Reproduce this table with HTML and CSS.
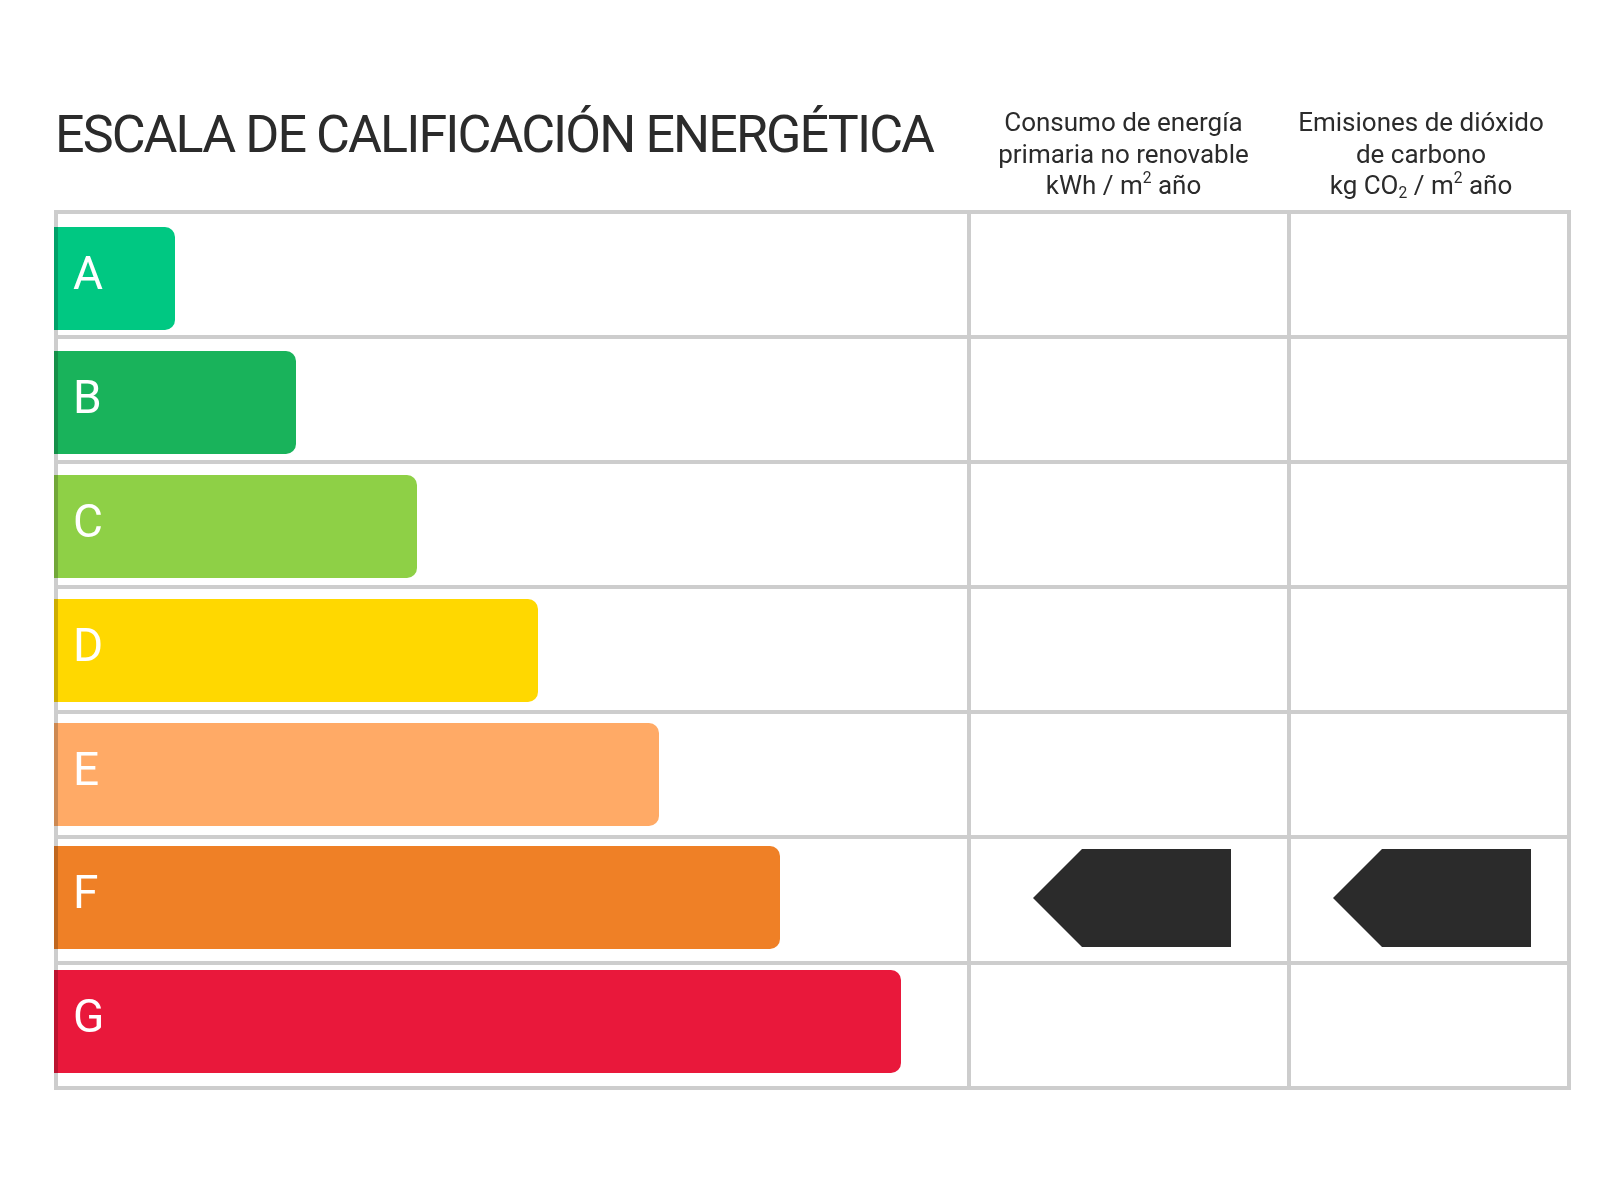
FILE: index.html
```html
<!DOCTYPE html>
<html lang="es">
<head>
<meta charset="utf-8">
<title>Escala de calificación energética</title>
<link rel="stylesheet" href="styles.css">
</head>
<body>
<div class="page">
  <div class="head">
    <h1 class="title">ESCALA DE CALIFICACIÓN ENERGÉTICA</h1>
    <div class="colhead c1">Consumo de energía<br>primaria no renovable<br>kWh / m<span class="sup">2</span> año</div>
    <div class="colhead c2">Emisiones de dióxido<br>de carbono<br>kg CO<span class="sub">2</span> / m<span class="sup">2</span> año</div>
  </div>
  <div class="table">
    <div class="cell k1 r1"></div><div class="cell k2 r1"></div><div class="cell k3 r1"></div>
    <div class="cell k1 r2"></div><div class="cell k2 r2"></div><div class="cell k3 r2"></div>
    <div class="cell k1 r3"></div><div class="cell k2 r3"></div><div class="cell k3 r3"></div>
    <div class="cell k1 r4"></div><div class="cell k2 r4"></div><div class="cell k3 r4"></div>
    <div class="cell k1 r5"></div><div class="cell k2 r5"></div><div class="cell k3 r5"></div>
    <div class="cell k1 r6"></div>
    <div class="cell k2 r6 mark"><svg class="arrow" viewBox="0 0 198 98" width="198" height="98"><polygon points="0,49 49,0 198,0 198,98 49,98"/></svg></div>
    <div class="cell k3 r6 mark"><svg class="arrow" viewBox="0 0 198 98" width="198" height="98"><polygon points="0,49 49,0 198,0 198,98 49,98"/></svg></div>
    <div class="cell k1 r7"></div><div class="cell k2 r7"></div><div class="cell k3 r7"></div>
    <div class="bars">
      <div class="bar a" style="width:121px">A</div>
      <div class="bar b" style="width:242px">B</div>
      <div class="bar c" style="width:363px">C</div>
      <div class="bar d" style="width:484px">D</div>
      <div class="bar e" style="width:605px">E</div>
      <div class="bar f" style="width:726px">F</div>
      <div class="bar g" style="width:847px">G</div>
    </div>
  </div>
</div>
</body>
</html>
```
FILE: styles.css
```css
html, body {
  margin: 0;
  padding: 0;
  background: #ffffff;
}
body {
  font-family: Roboto, "Liberation Sans", sans-serif;
  color: #2b2b2b;
}
.page {
  width: 1517px;
  margin-left: 54px;
  padding-top: 107px;
}
.head {
  display: grid;
  grid-template-columns: 917px 320px 280px;
  align-items: start;
  margin-bottom: 8px;
}
.title {
  margin: 2px 0 0 1px;
  font-size: 52px;
  line-height: 52px;
  font-weight: 400;
  letter-spacing: -1.9px;
  white-space: nowrap;
  color: #2b2b2b;
}
.colhead {
  font-size: 26px;
  line-height: 31.6px;
  text-align: center;
  color: #2b2b2b;
}
.c1 { padding-right: 15px; }
.c2 { padding-right: 20px; }
.sup, .sub {
  font-size: 0.6em;
  line-height: 0;
}
.sup { vertical-align: 0.7em; }
.sub { vertical-align: -0.25em; }
.table {
  display: grid;
  grid-template-columns: 909px 316px 276px;
  grid-template-rows: repeat(7, 1fr);
  gap: 4px;
  padding: 4px;
  height: 880px;
  box-sizing: border-box;
  background: #cdcdcd;
}
.cell {
  background: #ffffff;
}
.k1 { grid-column: 1; }
.k2 { grid-column: 2; }
.k3 { grid-column: 3; }
.r1 { grid-row: 1; }
.r2 { grid-row: 2; }
.r3 { grid-row: 3; }
.r4 { grid-row: 4; }
.r5 { grid-row: 5; }
.r6 { grid-row: 6; }
.r7 { grid-row: 7; }
.mark {
  display: flex;
  align-items: center;
  justify-content: center;
  padding-left: 6px;
  padding-bottom: 5px;
}
.arrow {
  display: block;
  fill: #2b2b2b;
}
.bars {
  grid-column: 1 / 2;
  grid-row: 1 / 8;
  margin-left: -4px;
  padding-top: 13.6px;
  display: flex;
  flex-direction: column;
  align-items: flex-start;
  gap: 20.8px;
}
.bar {
  height: 103px;
  box-sizing: border-box;
  border-radius: 0 10px 10px 0;
  display: flex;
  align-items: center;
  padding-left: 19px;
  padding-bottom: 11px;
  font-size: 46px;
  color: #ffffff;
  mix-blend-mode: multiply;
}
.a { background: #00c882; }
.b { background: #19b35b; }
.c { background: #8ed046; }
.d { background: #ffd800; }
.e { background: #ffaa66; }
.f { background: #ef8026; }
.g { background: #e9183b; }
```
